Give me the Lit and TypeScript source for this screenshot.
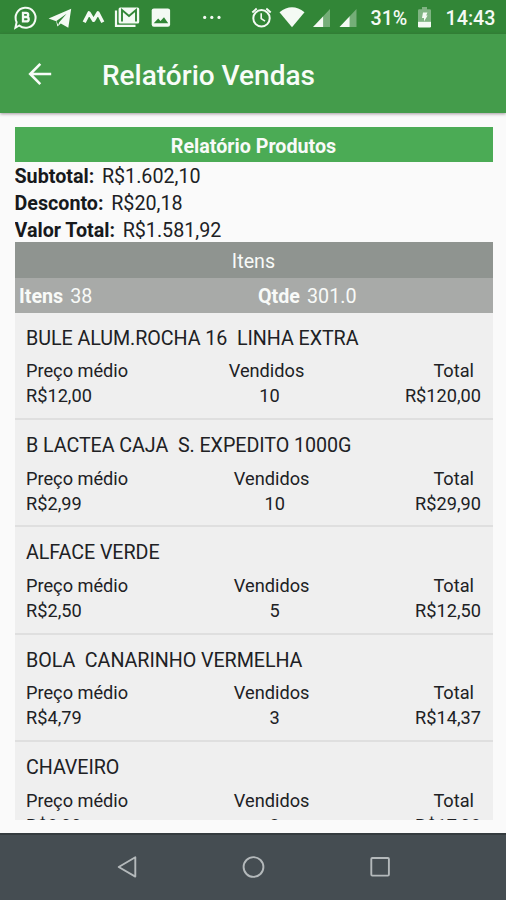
import { LitElement, html, css, svg } from "lit";
import { customElement, property } from "lit/decorators.js";

interface Product {
  name: string;
  price: string;
  sold: string;
  total: string;
}

const PRODUCTS: Product[] = [
  { name: "BULE ALUM.ROCHA 16  LINHA EXTRA", price: "R$12,00", sold: "10", total: "R$120,00" },
  { name: "B LACTEA CAJA  S. EXPEDITO 1000G", price: "R$2,99", sold: "10", total: "R$29,90" },
  { name: "ALFACE VERDE", price: "R$2,50", sold: "5", total: "R$12,50" },
  { name: "BOLA  CANARINHO VERMELHA", price: "R$4,79", sold: "3", total: "R$14,37" },
  { name: "CHAVEIRO", price: "R$8,99", sold: "2", total: "R$17,98" },
];

@customElement("status-bar")
class StatusBar extends LitElement {
  static styles = css`
    :host {
      display: block;
      height: 34px;
      flex: none;
      background: #328637;
      color: #f4faf4;
    }
    .bar {
      display: flex;
      justify-content: space-between;
      height: 34px;
      font-size: 19.7px;
      font-weight: 500;
      line-height: 38px;
    }
    .left {
      width: 230px;
      height: 34px;
      flex: none;
    }
    .right {
      display: flex;
      padding-right: 10.5px;
    }
    .signals {
      width: 112px;
      height: 34px;
    }
    .percent {
      margin-left: 9px;
      letter-spacing: -0.15px;
    }
    .battery {
      width: 13px;
      height: 34px;
      margin: 0 14.5px 0 11px;
    }
  `;
  render() {
    const cell = (x: number) => svg`
      <path d="M${x} 27 L${x + 10.2} 16.2 V27z" fill="#f4faf4"/>
      <path d="M${x + 10.2} 16.2 L${x + 17} 9 V27 H${x + 10.2}z" fill="#f4faf4" opacity=".35"/>`;
    return html`<div class="bar">
      <svg class="left" viewBox="0 0 230 34" fill="#f4faf4">
        <path d="M19.2 25.5 L15.4 27.8 L16.6 22.2 A10 10 0 1 1 19.2 25.5z" fill="none" stroke="#f4faf4" stroke-width="2"/>
        <path d="M23 12.8 h3.1 a2 2 0 0 1 0 4.2 H23z M23 17 h3.5 a2.2 2.2 0 0 1 0 4.4 H23z" fill="none" stroke="#f4faf4" stroke-width="2.3"/>
        <path d="M48.6 18.6 L71.2 8.7 L68.3 27.8 L60.8 23.4 L57.4 26.6 L56.2 21.2z"/>
        <path d="M56.4 21 L66.6 13.8 L59.2 22.2 L58.2 25z" fill="#328637"/>
        <path d="M84.2 22.3 L89 12.9 L93.6 20.3 L98 12.9 L102.8 22.3" fill="none" stroke="#f4faf4" stroke-width="3.4" stroke-linejoin="round"/>
        <path d="M116 10.5 V25.8 H135.5" fill="none" stroke="#f4faf4" stroke-width="2.2"/>
        <rect x="118.6" y="7.4" width="20.6" height="16" rx="1.5"/>
        <path d="M122 21.5 V10 L129 16 L136 10 V21.5" fill="none" stroke="#328637" stroke-width="1.9"/>
        <rect x="151.7" y="8.4" width="18.4" height="18.4" rx="2.2"/>
        <path d="M153.7 23.2 L158.2 18.6 L160.5 21 L164 17.2 L168.2 23.2z" fill="#328637"/>
        <circle cx="204.7" cy="17.4" r="1.6"/><circle cx="211.8" cy="17.4" r="1.6"/><circle cx="219" cy="17.4" r="1.6"/>
      </svg>
      <div class="right">
        <svg class="signals" viewBox="250 0 112 34">
          <g fill="none" stroke="#f4faf4" stroke-width="2">
            <circle cx="261.5" cy="18.3" r="8.2"/>
            <path d="M261.2 13.2 V18.6 L265 21.2" stroke-width="1.6"/>
            <path d="M252.3 12.5 L256.7 8.6 M266.3 8.6 L270.7 12.5"/>
          </g>
          <path d="M279.5 12.2 Q292 2.4 304.5 12.2 L292 27.3z" fill="#f4faf4"/>
          ${cell(313)}${cell(339.5)}
        </svg>
        <span class="percent">31%</span>
        <svg class="battery" viewBox="0 0 13 34">
          <path d="M0 10.5 q0-1.3 1.3-1.3 H4 V7 h5 v2.2 h2.7 q1.3 0 1.3 1.3 V21 H0z" fill="#f4faf4" opacity=".4"/>
          <path d="M0 21.5 H13 V26.2 q0 1.3-1.3 1.3 H1.3 q-1.3 0-1.3-1.3z" fill="#f4faf4"/>
          <path d="M5 12.5 H9.4 L8.2 15.6 H9.6 L6 21.6 V18 H4z" fill="#f4faf4"/>
        </svg>
        <span>14:43</span>
      </div>
    </div>`;
  }
}

@customElement("product-row")
class ProductRow extends LitElement {
  @property({ attribute: false }) product!: Product;
  static styles = css`
    :host {
      display: block;
      box-sizing: border-box;
      height: 107.3px;
      padding: 11px 11.5px 0;
      border-bottom: 2px solid #dfdfdf;
    }
    .name {
      font-size: 19.7px;
      letter-spacing: -0.06px;
      line-height: 29px;
      white-space: pre;
    }
    .cols {
      display: flex;
      justify-content: space-between;
      margin-top: 5.5px;
      font-size: 18.2px;
      line-height: 25px;
    }
    .sold {
      text-align: center;
    }
    .count {
      padding-left: 6px;
    }
    .total {
      text-align: right;
    }
    .label {
      padding-right: 7px;
    }
  `;
  render() {
    const p = this.product;
    return html`<div class="name">${p.name}</div>
      <div class="cols">
        <div><div>Preço médio</div><div>${p.price}</div></div>
        <div class="sold"><div>Vendidos</div><div class="count">${p.sold}</div></div>
        <div class="total"><div class="label">Total</div><div>${p.total}</div></div>
      </div>`;
  }
}

@customElement("app-root")
class AppRoot extends LitElement {
  static styles = css`
    :host {
      display: flex;
      flex-direction: column;
      width: 506px;
      height: 900px;
      overflow: hidden;
      background: #fafafa;
      color: #202124;
      font-family: Roboto, "Liberation Sans", sans-serif;
    }
    .appbar {
      display: flex;
      align-items: center;
      flex: none;
      height: 79px;
      background: #449c4b;
      color: #f8fcf8;
      box-shadow: 0 1px 3px rgba(60, 30, 50, 0.45);
    }
    .back {
      width: 24px;
      height: 24px;
      margin: 0 50px 0 28px;
    }
    .title {
      font-size: 28px;
      font-weight: 500;
      line-height: 36px;
      padding-top: 4px;
    }
    .report {
      flex: none;
      display: flex;
      flex-direction: column;
      width: 478px;
      height: 693px;
      margin: 14px 0 13px 14.5px;
      overflow: hidden;
      font-size: 19.7px;
    }
    .band {
      flex: none;
      height: 35.3px;
      line-height: 39.4px;
      text-align: center;
      color: #f8faf8;
    }
    .green {
      background: #4bab55;
      font-weight: 700;
      font-size: 19.7px;
    }
    .summary {
      flex: none;
      height: 80px;
      line-height: 26.7px;
      padding-top: 2px;
      box-sizing: border-box;
    }
    .summary b {
      margin-right: 2.8px;
      color: #17191c;
    }
    .dark {
      background: #8f9490;
    }
    .light {
      display: grid;
      grid-template-columns: 1fr 1fr;
      line-height: 37.6px;
      background: #a8aaa8;
      text-align: left;
    }
    .light span {
      padding-left: 4.5px;
    }
    .light b {
      margin-right: 2.2px;
    }
    .list {
      flex: 1;
      min-height: 0;
      overflow: hidden;
      background: #efefef;
    }
    .nav {
      flex: none;
      box-sizing: border-box;
      height: 67px;
      border-top: 2px solid #343b3f;
      background: #454d52;
    }
    .nav svg {
      display: block;
      width: 506px;
      height: 65px;
    }
  `;
  render() {
    return html`<status-bar></status-bar>
      <header class="appbar">
        <svg class="back" viewBox="0 0 24 24" fill="none" stroke="#f8fcf8" stroke-width="2.6">
          <path d="M23.2 12 H2.5 M12.3 1.8 L2.2 12 L12.3 22.2"/>
        </svg>
        <div class="title">Relatório Vendas</div>
      </header>
      <main class="report">
        <div class="band green">Relatório Produtos</div>
        <div class="summary">
          <div><b>Subtotal:</b> R$1.602,10</div>
          <div><b>Desconto:</b> R$20,18</div>
          <div><b>Valor Total:</b> R$1.581,92</div>
        </div>
        <div class="band dark">Itens</div>
        <div class="band light">
          <span><b>Itens</b> 38</span>
          <span><b>Qtde</b> 301.0</span>
        </div>
        <div class="list">
          ${PRODUCTS.map((p) => html`<product-row .product=${p}></product-row>`)}
        </div>
      </main>
      <nav class="nav">
        <svg viewBox="0 835 506 65" fill="none" stroke="#b4b9bb" stroke-width="1.9" stroke-linejoin="round">
          <path d="M118.7 867 L135.3 857.2 V876.6z"/>
          <circle cx="253.5" cy="867" r="9.9"/>
          <rect x="371.3" y="858" width="17.6" height="17.6" rx="1"/>
        </svg>
      </nav>`;
  }
}
